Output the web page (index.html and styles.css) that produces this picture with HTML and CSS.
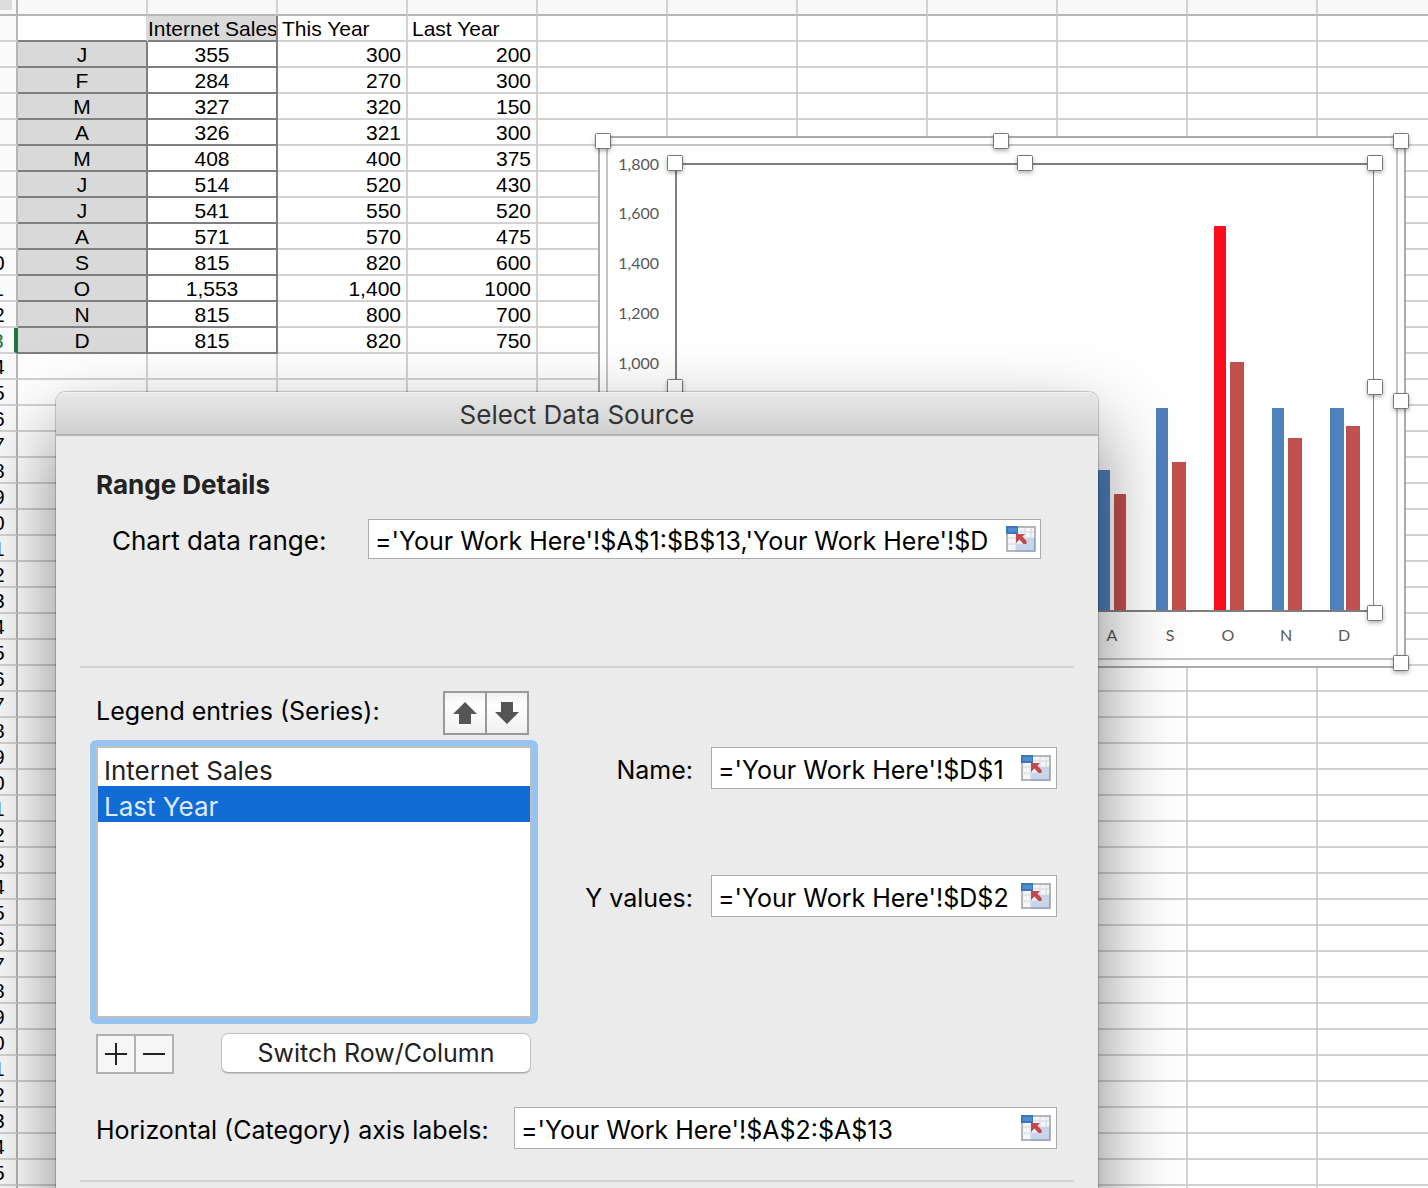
FILE: index.html
```html
<!DOCTYPE html>
<html lang="en">
<head>
<meta charset="utf-8">
<title>Select Data Source</title>
<link rel="stylesheet" href="styles.css">
</head>
<body>
<main class="workbook">
  <table class="sheet">
    <colgroup>
      <col class="col-head"><col class="col"><col class="col"><col class="col"><col class="col"><col class="col">
      <col class="col"><col class="col"><col class="col"><col class="col"><col class="col"><col>
    </colgroup>
    <thead><tr id="columns"></tr></thead>
    <tbody id="rows"></tbody>
  </table>

  <svg class="chart" width="822" height="548" viewBox="591 129 822 548" role="img" aria-label="Internet Sales and Last Year by month">
    <defs>
      <filter id="lift" x="-40%" y="-40%" width="180%" height="190%"><feDropShadow dx="0" dy="2" stdDeviation="2" flood-opacity=".3"/></filter>
      <rect id="grip" x="-7.5" y="-7.5" width="15" height="15" rx="1" fill="#fff" stroke="#777" filter="url(#lift)"/>
    </defs>
    <rect x="599" y="137" width="806" height="530" fill="#fff" stroke="#ababab" stroke-width="2"/>
    <rect x="607" y="145" width="790" height="514" fill="#fff" stroke="#c4c4c4" stroke-width="2"/>
    <g class="axis-text" text-anchor="end">
      <text x="659" y="170">1,800</text>
      <text x="659" y="219">1,600</text>
      <text x="659" y="269">1,400</text>
      <text x="659" y="319">1,200</text>
      <text x="659" y="369">1,000</text>
    </g>
    <g fill="#4f81bd">
      <rect x="1098" y="470" width="12" height="140"/>
      <rect x="1156" y="408" width="12" height="202"/>
      <rect x="1214" y="226" width="12" height="384" fill="#fc0d1b"/>
      <rect x="1272" y="408" width="12" height="202"/>
      <rect x="1330" y="408" width="14" height="202"/>
    </g>
    <g fill="#c0504d">
      <rect x="1114" y="494" width="12" height="116"/>
      <rect x="1172" y="462" width="14" height="148"/>
      <rect x="1230" y="362" width="14" height="248"/>
      <rect x="1288" y="438" width="14" height="172"/>
      <rect x="1346" y="426" width="14" height="184"/>
    </g>
    <g stroke="#7f7f7f" stroke-width="2" fill="none">
      <path d="M676 611V164H1374M676 611H1374"/>
      <path d="M1373.5 164V611" stroke-width="1"/>
    </g>
    <g class="axis-text" text-anchor="middle">
      <text x="1112" y="641">A</text>
      <text x="1170" y="641">S</text>
      <text x="1228" y="641">O</text>
      <text x="1286" y="641">N</text>
      <text x="1344" y="641">D</text>
    </g>
    <use href="#grip" x="603" y="141"/><use href="#grip" x="1001" y="141"/><use href="#grip" x="1401" y="141"/>
    <use href="#grip" x="1401" y="401"/><use href="#grip" x="1401" y="663"/>
    <use href="#grip" x="675" y="163"/><use href="#grip" x="1025" y="163"/><use href="#grip" x="1375" y="163"/>
    <use href="#grip" x="675" y="387"/><use href="#grip" x="1375" y="387"/><use href="#grip" x="1375" y="613"/>
  </svg>

  <svg class="symbols" aria-hidden="true">
    <symbol id="pick" viewBox="0 0 30 26">
      <rect width="30" height="26" fill="#b3b5b9"/>
      <path d="M2 2h26v22H2z" fill="#f4f5f8"/>
      <path d="M10 18h18v6H10zM19 12h9v6h-9z" fill="#c3d5ee"/>
      <path d="M2 12h26M2 18h26M12 6h16M10 8v16M19 2v22M25 2v22" stroke="#d3d6dc" fill="none"/>
      <path d="M28.500 12v13H10" stroke="#8fa6c6" fill="none"/>
      <path d="M0 0h12v8H0z" fill="#3a78bd"/>
      <path d="M2 2h9v4H2z" fill="#4f8dd0"/>
      <path d="M10 8h9l-2.500 2.500 4 4.500v3h-3l-4-4.500L10 17z" fill="#c4474b"/>
    </symbol>
  </svg>

  <form class="dialog" role="dialog" aria-labelledby="dialog-title">
    <h1 class="title" id="dialog-title">Select Data Source</h1>
    <div class="body">
      <section class="range">
        <h2 class="heading">Range Details</h2>
        <div class="row range-row">
          <label class="range-label" for="range">Chart data range:</label>
          <div class="field"><input id="range" class="value" value="='Your Work Here'!$A$1:$B$13,'Your Work Here'!$D"><button type="button" class="pick" aria-label="Pick chart data range"><svg width="30" height="26"><use href="#pick"/></svg></button></div>
        </div>
      </section>

      <section class="series">
        <div class="columns">
          <div class="entries">
            <div class="row entries-head">
              <label class="entries-label" for="list">Legend entries (Series):</label>
              <div class="arrows">
                <button type="button" class="arrow" aria-label="Move up"><svg width="24" height="22" viewBox="0 0 24 22"><path d="M12 0l12 12h-6v10H6V12H0z"/></svg></button>
                <button type="button" class="arrow" aria-label="Move down"><svg width="24" height="22" viewBox="0 0 24 22"><path d="M6 0h12v10h6L12 22 0 10h6z"/></svg></button>
              </div>
            </div>
            <select id="list" class="list" size="7">
              <option>Internet Sales</option>
              <option class="current">Last Year</option>
            </select>
            <div class="row entries-foot">
              <div class="steps">
                <button type="button" class="step" aria-label="Add series"><svg width="22" height="22"><path d="M0 11h22M11 0v22"/></svg></button>
                <button type="button" class="step" aria-label="Remove series"><svg width="22" height="22"><path d="M0 11h22"/></svg></button>
              </div>
              <button type="button" class="switch">Switch Row/Column</button>
            </div>
          </div>
          <div class="details">
            <div class="row detail">
              <label for="name">Name:</label>
              <div class="field"><input id="name" class="value" value="='Your Work Here'!$D$1"><button type="button" class="pick" aria-label="Pick name"><svg width="30" height="26"><use href="#pick"/></svg></button></div>
            </div>
            <div class="row detail">
              <label for="yvalues">Y values:</label>
              <div class="field"><input id="yvalues" class="value" value="='Your Work Here'!$D$2"><button type="button" class="pick" aria-label="Pick Y values"><svg width="30" height="26"><use href="#pick"/></svg></button></div>
            </div>
          </div>
        </div>
        <div class="row axis-row">
          <label class="axis-label" for="axis">Horizontal (Category) axis labels:</label>
          <div class="field"><input id="axis" class="value" value="='Your Work Here'!$A$2:$A$13"><button type="button" class="pick" aria-label="Pick axis labels"><svg width="30" height="26"><use href="#pick"/></svg></button></div>
        </div>
      </section>
    </div>
  </form>
</main>
<script src="sheet.js"></script>
</body>
</html>
```
FILE: styles.css
```css
* { box-sizing: border-box; }

body { margin: 0; }

.workbook {
  position: relative;
  height: 100vh;
  overflow: hidden;
  background: #fff;
}

/* Spreadsheet grid */
.sheet {
  width: calc(100% + 30px);
  margin-left: -30px;
  table-layout: fixed;
  border-collapse: separate;
  border-spacing: 0;
  font: 21px/22px "Liberation Sans", Arial, sans-serif;
  color: #000;
}

.col-head { width: 48px; }
.col { width: 130px; }

.sheet th, .sheet td {
  height: 26px;
  padding: 2px 0 0;
  border: 0 solid #d2d2d2;
  border-width: 0 2px 2px 0;
  font-weight: normal;
  white-space: nowrap;
  overflow: hidden;
}

.sheet thead th {
  height: 16px;
  background: #f8f8f8;
  border-bottom-color: #b7b5b4;
}

.sheet tr > :last-child { border-right: 0; }
.sheet .corner, .sheet .row-head { border-right-color: #b7b5b4; }
.sheet .corner { background: linear-gradient(#dcdcdc, #dcdcdc) 0 0 / 42px 10px no-repeat #f8f8f8; }
.sheet .row-head { background: #fafafa; text-align: center; }
.sheet .active { color: #217346; border-right: 4px solid #217346; }
.sheet .right { text-align: right; padding-right: 5px; }
.sheet .left { padding-left: 4px; }
.sheet .boxed { text-align: center; border-color: #7f7f7f; }
.sheet .shaded { background: #d9d9d9; }
.sheet .blank { border-right-color: #d9d9d9; border-bottom-color: #7f7f7f; }
.sheet .name { text-align: left; }

.chart { position: absolute; left: 591px; top: 129px; }
.axis-text { font: 16px Lato, sans-serif; fill: #595959; }
.symbols { position: absolute; width: 0; height: 0; }

/* Dialog */
.dialog {
  position: absolute;
  left: 56px;
  top: 392px;
  bottom: -80px;
  width: 1042px;
  border-radius: 10px 10px 0 0;
  background: #ebebeb;
  box-shadow: 0 0 1px 1px rgba(0, 0, 0, .2), 0 36px 80px rgba(0, 0, 0, .5);
  font: 25px/32px Inter, sans-serif;
  color: #000;
}

.title {
  height: 44px;
  margin: 0;
  padding: 7px 0 3px;
  border-bottom: 2px solid #b4b4b4;
  border-radius: 10px 10px 0 0;
  background: linear-gradient(#e8e8e8, #d0d0d0);
  box-shadow: inset 0 1px #f4f4f4;
  font: inherit;
  font-size: 26px;
  text-align: center;
  color: #333;
}

.body { padding: 0 24px; }

.range, .series {
  padding: 33px 17px 107px 16px;
  border-bottom: 2px solid #d3d3d3;
}

.series { padding-top: 23px; padding-bottom: 31px; }

.heading {
  margin: 0 0 18px;
  font: inherit;
  font-size: 26px;
  font-weight: 700;
  color: #222;
}

.row { display: flex; align-items: center; }
.row label { padding-top: 4px; }
.row .entries-label { padding: 0 0 4px; }
.range-row { padding: 0 16px; }
.range-label { width: 256px; font-size: 26px; }

.field {
  display: flex;
  flex: 1;
  align-items: center;
  gap: 10px;
  min-width: 0;
  height: 42px;
  padding: 0 5px 0 6px;
  border: 1px solid #acacac;
  background: #fff;
}

.range-row .field { height: 40px; padding-right: 4px; }

.value {
  flex: 1;
  min-width: 0;
  height: 38px;
  padding: 4px 0 0;
  border: 0;
  outline: 0;
  background: none;
  font: inherit;
  color: #000;
}

.pick { display: flex; padding: 0; border: 0; background: none; }

.columns { display: flex; justify-content: space-between; }
.entries { width: 436px; }

.entries-head { justify-content: space-between; height: 44px; padding-right: 3px; }
.arrows { display: flex; border: 2px solid #999; }

.arrow {
  display: flex;
  align-items: center;
  justify-content: center;
  width: 42px;
  height: 40px;
  padding: 0;
  border: 0;
  background: linear-gradient(#f0f0f0, #fff 30%, #f0f0f0);
  fill: #555;
}

.arrow:first-child { width: 40px; }
.arrow + .arrow { border-left: 2px solid #999; }

.list {
  display: block;
  width: 100%;
  height: 272px;
  margin: 11px 0 15px;
  padding: 2px 0 0;
  border: 2px solid #bfbfbf;
  border-radius: 2px;
  outline: 0;
  background: #fff;
  box-shadow: 0 0 0 6px #97c3f0;
  font: inherit;
  font-size: 26px;
  overflow: hidden;
}

.list option { height: 36px; padding: 5px 6px 0; color: #222; }
.list .current { background: #116cd6; color: #dfeafa; }

.entries-foot { justify-content: space-between; align-items: flex-start; padding-right: 1px; }
.steps { display: flex; margin-top: 1px; border: 2px solid #b2b2b2; }

.step {
  display: flex;
  align-items: center;
  justify-content: center;
  width: 38px;
  height: 36px;
  padding: 0;
  border: 0;
  background: #f6f6f6;
  stroke: #222;
  stroke-width: 2;
}

.step:first-child { width: 36px; }
.step + .step { border-left: 2px solid #b2b2b2; }

.switch {
  width: 310px;
  height: 40px;
  padding: 0;
  border: 1px solid #c4c4c4;
  border-bottom-color: #aaa;
  border-radius: 7px;
  background: #fff;
  box-shadow: 0 1px 1px rgba(0, 0, 0, .15);
  font: inherit;
  color: #222;
}

.details { display: flex; flex-direction: column; gap: 86px; padding-top: 56px; }
.detail { justify-content: flex-end; gap: 18px; }
.detail .field { flex: none; width: 346px; }

.axis-row { gap: 18px; margin-top: 33px; }
.axis-label { width: 400px; }
```
FILE: sheet.js
```js
const COLUMNS = 11;
const ROWS = 46;
const ACTIVE_ROW = 13;
const data = [
  ["J", "355", "300", "200"],
  ["F", "284", "270", "300"],
  ["M", "327", "320", "150"],
  ["A", "326", "321", "300"],
  ["M", "408", "400", "375"],
  ["J", "514", "520", "430"],
  ["J", "541", "550", "520"],
  ["A", "571", "570", "475"],
  ["S", "815", "820", "600"],
  ["O", "1,553", "1,400", "1000"],
  ["N", "815", "800", "700"],
  ["D", "815", "820", "750"],
];
const headings = ["", "Internet Sales", "This Year", "Last Year"];
const headingStyles = ["blank", "boxed shaded name", "left", "left"];
const dataStyles = ["boxed shaded", "boxed", "right", "right"];

function cell(row, tag, className, text) {
  const el = document.createElement(tag);
  el.className = className || "";
  el.textContent = text || "";
  row.append(el);
}

const head = document.getElementById("columns");
cell(head, "th", "corner");
for (let c = 0; c < COLUMNS; c++) cell(head, "th");

const body = document.getElementById("rows");
for (let r = 1; r <= ROWS; r++) {
  const row = document.createElement("tr");
  const values = r === 1 ? headings : data[r - 2] || [];
  const styles = r === 1 ? headingStyles : values.length ? dataStyles : [];
  cell(row, "th", r === ACTIVE_ROW ? "row-head active" : "row-head", String(r));
  for (let c = 0; c < COLUMNS; c++) cell(row, "td", styles[c], values[c]);
  body.append(row);
}
```
